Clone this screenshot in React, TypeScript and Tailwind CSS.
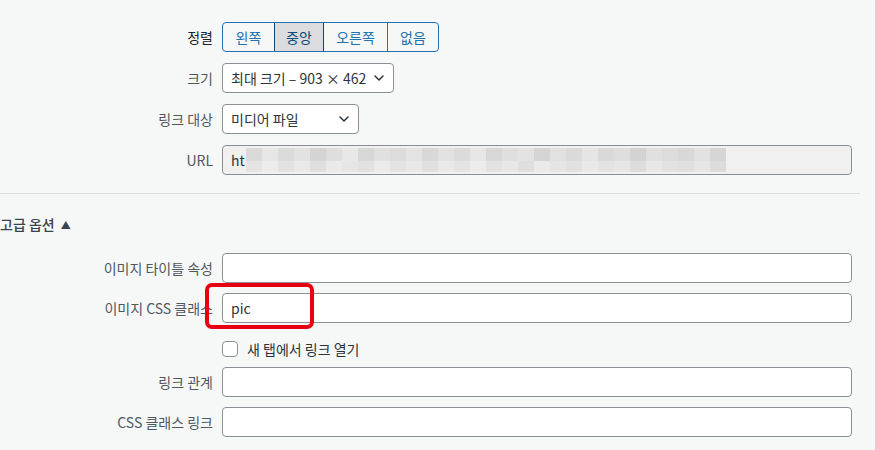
import React from "react";
import { ChevronDown } from "lucide-react";

const font = "font-['Segoe_UI','Noto_Sans_CJK_KR',sans-serif]";

const labelCn = "w-[213px] shrink-0 text-right text-[14px] text-[#50575e]";
const inputCn =
  "h-[30px] w-[630px] rounded-[4px] border border-[#8c8f94] bg-white px-2 text-[14px] text-[#2c3338]";

// pixelated blur of the hidden url, two rows of blocks
const blurTop = [
  "bg-[#dadada]", "bg-[#e6e6e6]", "bg-[#d9dcdb]", "bg-[#e2e2e2]", "bg-[#d4d4d4]",
  "bg-[#dedede]", "bg-[#e8e8e8]", "bg-[#d6d8d8]", "bg-[#e0e0e0]", "bg-[#dcdcdc]",
  "bg-[#e4e4e4]", "bg-[#d8d8d8]", "bg-[#e2e2e2]", "bg-[#dbdbdb]", "bg-[#e6e6e6]",
  "bg-[#d7d7d7]", "bg-[#dfdfdf]", "bg-[#e3e3e3]", "bg-[#d5d5d5]", "bg-[#e1e1e1]",
  "bg-[#dadada]", "bg-[#e5e5e5]", "bg-[#d9d9d9]", "bg-[#dedede]", "bg-[#d3d3d3]",
  "bg-[#e0e0e0]", "bg-[#dcdcdc]", "bg-[#d8d8d8]", "bg-[#e2e2e2]", "bg-[#d6d6d6]",
];
const blurBottom = [
  "bg-[#e4e4e4]", "bg-[#ececec]", "bg-[#e2e2e2]", "bg-[#e9e9e9]", "bg-[#dfdfdf]",
  "bg-[#eaeaea]", "bg-[#e6e6e6]", "bg-[#e1e1e1]", "bg-[#ebebeb]", "bg-[#e3e3e3]",
  "bg-[#e8e8e8]", "bg-[#e0e0e0]", "bg-[#e9e9e9]", "bg-[#e4e4e4]", "bg-[#ececec]",
  "bg-[#e2e2e2]", "bg-[#e7e7e7]", "bg-[#dfdfdf]", "bg-[#eaeaea]", "bg-[#e5e5e5]",
  "bg-[#e1e1e1]", "bg-[#e9e9e9]", "bg-[#e3e3e3]", "bg-[#e6e6e6]", "bg-[#dddddd]",
  "bg-[#e8e8e8]", "bg-[#e2e2e2]", "bg-[#e0e0e0]", "bg-[#e6e6e6]", "bg-[#dcdcdc]",
];

const Row: React.FC<{ label: string; dark?: boolean; children: React.ReactNode }> = ({
  label,
  dark,
  children,
}) => (
  <div className="flex h-[30px] items-center gap-[9px]">
    <span className={`${labelCn} ${dark ? "!text-[#1d2327]" : ""}`}>{label}</span>
    {children}
  </div>
);

const Select: React.FC<{ text: string; width: string }> = ({ text, width }) => (
  <div
    className={`flex h-[30px] items-center justify-between rounded-[4px] border border-[#8c8f94] bg-white pl-2 pr-[6px] text-[14px] text-[#2c3338] ${width}`}
  >
    <span>{text}</span>
    <ChevronDown size={16} strokeWidth={2.2} className="text-[#2c3338]" />
  </div>
);

const alignButtons = ["왼쪽", "중앙", "오른쪽", "없음"];

export default function App() {
  return (
    <div className={`relative h-[450px] w-[875px] overflow-hidden bg-[#f6f7f7] ${font}`}>
      <div className="flex flex-col gap-[11px] pt-[22px]">
        <Row label="정렬" dark>
          <div className="flex h-[30px] overflow-hidden rounded-[4px] border border-[#2271b1] text-[14px]">
            {alignButtons.map((b, i) => (
              <div
                key={b}
                className={
                  i === 1
                    ? "flex w-[50px] items-center justify-center border-x border-[#0a4b78] bg-[#dcdcde] text-[#0a4b78]"
                    : i === 0
                    ? "flex w-[51px] items-center justify-center text-[#2271b1]"
                    : i === 2
                    ? "flex w-[64px] items-center justify-center border-r border-[#2271b1] text-[#2271b1]"
                    : "flex w-[50px] items-center justify-center text-[#2271b1]"
                }
              >
                {b}
              </div>
            ))}
          </div>
        </Row>
        <Row label="크기">
          <Select text="최대 크기 – 903 × 462" width="w-[172px]" />
        </Row>
        <Row label="링크 대상">
          <Select text="미디어 파일" width="w-[137px]" />
        </Row>
        <Row label="URL">
          <div className={`${inputCn} flex items-center !bg-[#f0f0f1]`}>
            <span>ht</span>
            <div className="ml-[1px] flex flex-col">
              <div className="flex">
                {blurTop.map((c, i) => (
                  <div key={i} className={`h-[13px] w-[16px] ${c}`} />
                ))}
              </div>
              <div className="flex">
                {blurBottom.map((c, i) => (
                  <div key={i} className={`h-[11px] w-[16px] ${c}`} />
                ))}
              </div>
            </div>
          </div>
        </Row>
      </div>

      <div className="mt-[18px] h-px w-[860px] bg-[#dcdcde]" />

      <div className="mt-[20px] flex items-center gap-[6px] text-[14px] font-medium text-[#3c434a]">
        <span>고급 옵션</span>
        <span className="text-[10px]">▲</span>
      </div>

      <div className="mt-[18px] flex flex-col gap-[10px]">
        <Row label="이미지 타이틀 속성">
          <div className={inputCn} />
        </Row>
        <Row label="이미지 CSS 클래스">
          <div className={`${inputCn} flex items-center`}>pic</div>
        </Row>
        <div className="flex h-[24px] items-end gap-[9px]">
          <span className="w-[213px] shrink-0" />
          <div className="flex h-[16px] items-center gap-[9px]">
            <div className="h-[16px] w-[16px] rounded-[4px] border border-[#8c8f94] bg-white" />
            <span className="text-[14px] text-[#2c3338]">새 탭에서 링크 열기</span>
          </div>
        </div>
        <Row label="링크 관계">
          <div className={inputCn} />
        </Row>
        <Row label="CSS 클래스 링크">
          <div className={inputCn} />
        </Row>
      </div>

      <div className="absolute left-[205px] top-[283px] h-[46px] w-[109px] rounded-[7px] border-[4px] border-[#e60012]" />
    </div>
  );
}
